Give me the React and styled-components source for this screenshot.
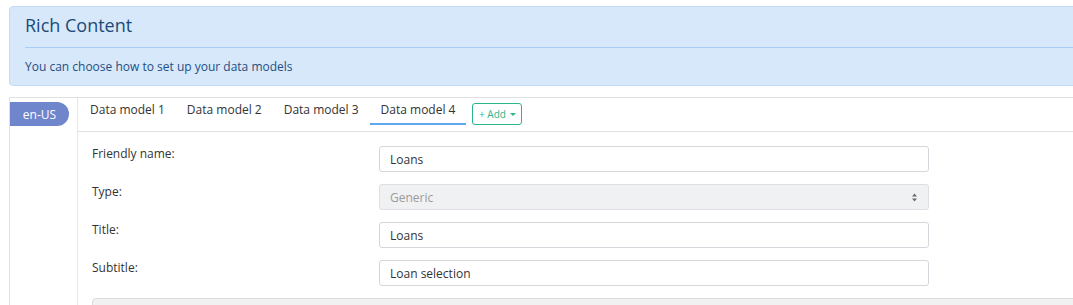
import React from "react";
import styled, { createGlobalStyle } from "styled-components";

const Global = createGlobalStyle`
  html, body { margin: 0; padding: 0; background: #fff; overflow: hidden; }
  body { font-family: "Open Sans", "DejaVu Sans", sans-serif; color: #333; }
  * { box-sizing: border-box; }
`;

const Page = styled.div`
  width: 1120px;
  padding: 6px 0 0 9px;
  display: flex;
  flex-direction: column;
  gap: 11px;
`;

const Alert = styled.div`
  background: #d7e8fb;
  border: 1px solid #c2dcf7;
  border-radius: 4px;
  padding: 6px 15px 9px 15px;
  color: #1e4f82;
`;

const AlertTitle = styled.h4`
  margin: 0;
  font-size: 18px;
  font-weight: 500;
  line-height: 24px;
  color: #1d4a78;
`;

const AlertRule = styled.hr`
  margin: 10px 0 10px 0;
  border: 0;
  border-top: 1px solid #a9cdf3;
`;

const AlertText = styled.p`
  margin: 0;
  font-size: 12px;
  line-height: 18px;
`;

const Card = styled.div`
  display: flex;
  border: 1px solid #e1e1e1;
  border-right: 0;
  border-bottom: 0;
  min-height: 220px;
`;

const LangColumn = styled.div`
  width: 68px;
  border-right: 1px solid #e6e6e6;
  padding-top: 4px;
  display: flex;
  flex-direction: column;
  align-items: flex-start;
`;

const LangPill = styled.div`
  width: 59px;
  height: 24px;
  background: #6f85cc;
  color: #fff;
  border-radius: 0 12px 12px 0;
  font-size: 12px;
  display: flex;
  align-items: center;
  justify-content: center;
`;

const Main = styled.div`
  flex: 1;
  display: flex;
  flex-direction: column;
`;

const TabBar = styled.div`
  display: flex;
  align-items: flex-start;
  padding: 0 0 6px 1px;
  border-bottom: 1px solid #e1e1e1;
`;

const Tab = styled.div`
  height: 27px;
  padding: 0 11px;
  font-size: 12px;
  line-height: 24px;
  color: #333;
  border-bottom: 2px solid ${(p) => (p.$active ? "#62a8f1" : "transparent")};
`;

const AddButton = styled.button`
  margin: 5px 0 0 6px;
  height: 22px;
  width: 50px;
  padding: 0;
  border: 1px solid #2bb58a;
  border-radius: 3px;
  background: #fff;
  color: #2bb58a;
  font-family: inherit;
  font-size: 10px;
  display: flex;
  align-items: center;
  justify-content: center;
  gap: 2px;
`;

const Caret = styled.span`
  width: 0;
  height: 0;
  border-left: 3px solid transparent;
  border-right: 3px solid transparent;
  border-top: 3px solid #2bb58a;
  margin-left: 2px;
`;

const Form = styled.div`
  padding: 14px 0 0 14px;
  display: flex;
  flex-direction: column;
  gap: 12px;
`;

const Row = styled.div`
  display: flex;
  align-items: flex-start;
`;

const Label = styled.div`
  width: 287px;
  font-size: 12px;
  line-height: 15px;
  color: #333;
`;

const Field = styled.div`
  width: 550px;
  height: 26px;
  border: 1px solid ${(p) => (p.$disabled ? "#dcdfe3" : "#d3d6da")};
  border-radius: 3px;
  background: ${(p) => (p.$disabled ? "#f0f1f3" : "#fff")};
  color: ${(p) => (p.$disabled ? "#9a9a9a" : "#333")};
  font-size: 12px;
  padding: 0 10px;
  display: flex;
  align-items: center;
  justify-content: space-between;
`;

const Arrows = styled.svg`
  width: 5px;
  height: 9px;
  margin-right: 1px;
`;

const GrayBox = styled.div`
  height: 40px;
  background: #f1f1f2;
  border: 1px solid #dcdcdc;
  border-radius: 4px;
  margin-right: -200px;
`;

export default function App() {
  return (
    <>
      <Global />
      <Page>
        <Alert>
          <AlertTitle>Rich Content</AlertTitle>
          <AlertRule />
          <AlertText>You can choose how to set up your data models</AlertText>
        </Alert>
        <Card>
          <LangColumn>
            <LangPill>en-US</LangPill>
          </LangColumn>
          <Main>
            <TabBar>
              <Tab>Data model 1</Tab>
              <Tab>Data model 2</Tab>
              <Tab>Data model 3</Tab>
              <Tab $active>Data model 4</Tab>
              <AddButton>
                + Add <Caret />
              </AddButton>
            </TabBar>
            <Form>
              <Row>
                <Label>Friendly name:</Label>
                <Field>Loans</Field>
              </Row>
              <Row>
                <Label>Type:</Label>
                <Field $disabled>
                  Generic
                  <Arrows viewBox="0 0 5 9">
                    <path d="M2.5 0.5 L5 3.6 L0 3.6 Z M2.5 8.5 L5 5.4 L0 5.4 Z" fill="#6b6b6b" />
                  </Arrows>
                </Field>
              </Row>
              <Row>
                <Label>Title:</Label>
                <Field>Loans</Field>
              </Row>
              <Row>
                <Label>Subtitle:</Label>
                <Field>Loan selection</Field>
              </Row>
              <GrayBox />
            </Form>
          </Main>
        </Card>
      </Page>
    </>
  );
}
